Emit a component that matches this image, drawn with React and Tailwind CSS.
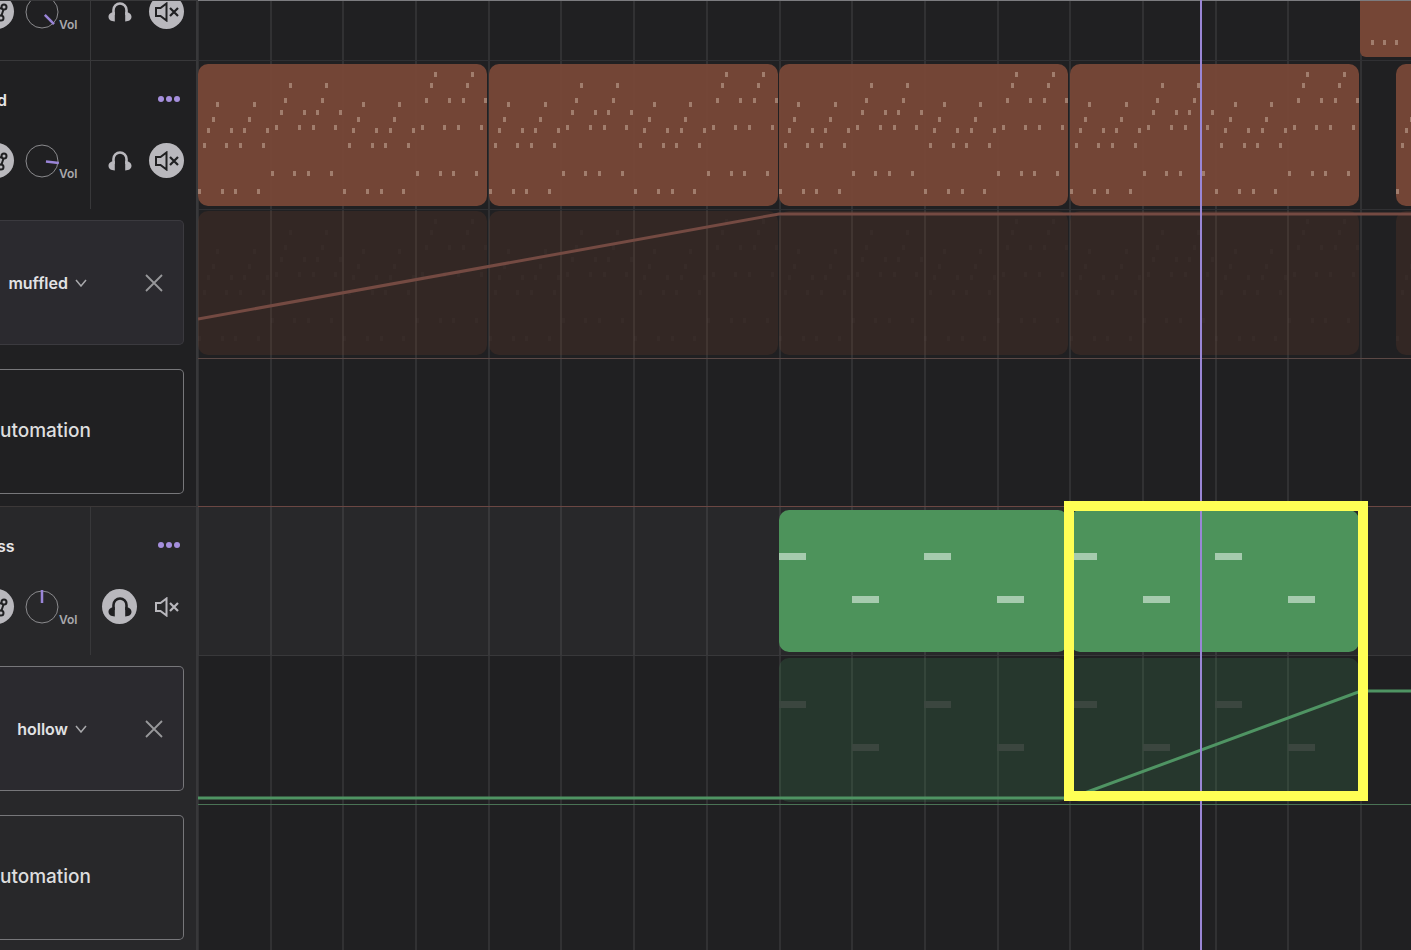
import React, { useState } from 'react';

// one bar is a bit under 73px, four bars make a clip
const barX = (bar) => Math.round((bar * 1163) / 16) - 1;
const BARS = Array.from({ length: 40 }, (_, i) => i);

const STEPS = [0, 1, 2, 3, 4, 0, 1, 2, 0, 1, 2, 3, 4, 0, 1, 2];
const CHORDS = [
  [125, 79, 64, 53, 38],
  [107, 61, 46, 34, 19],
  [125, 79, 64, 53, 38],
  [107, 61, 34, 19, 8],
];

const ARP_NOTES = CHORDS.flatMap((chord, bar) =>
  STEPS.map((level, step) => ({
    x: Math.round((bar + step / 16) * 72.7),
    y: chord[level],
    w: 3,
    h: 5,
  }))
);

const BASS_NOTES = [
  { x: 0, y: 43, w: 27, h: 7 },
  { x: 73, y: 86, w: 27, h: 7 },
  { x: 145, y: 43, w: 27, h: 7 },
  { x: 218, y: 86, w: 27, h: 7 },
];

const TOP_NOTES = [
  { x: 11, y: 39, w: 3, h: 5 },
  { x: 23, y: 39, w: 3, h: 5 },
  { x: 35, y: 39, w: 3, h: 5 },
];

const ARP_CLIPS = [0, 291, 581, 872, 1198];
const BASS_CLIPS = [581, 872];

const HeadphonesIcon = () => (
  <svg width="24" height="22" viewBox="0 0 24 22" fill="none" aria-hidden="true">
    <path d="M5.500 14V9a6.500 6.500 0 0 1 13 0v5" stroke="currentColor" strokeWidth="2.600" />
    <path d="M6.800 11v9.500C3 20.500.5 18.600.5 15.800S3 11.200 6.800 11ZM17.200 11v9.500c3.800 0 6.300-1.900 6.300-4.700S21 11.200 17.200 11Z" fill="currentColor" />
  </svg>
);

const MuteIcon = () => (
  <svg width="24" height="20" viewBox="0 0 24 20" fill="none" stroke="currentColor" strokeWidth="2" aria-hidden="true">
    <path d="M1 6h4.500L11.500 1.500v17L5.500 14H1Z" />
    <path d="m15 6 8 8M23 6l-8 8" strokeWidth="2.200" />
  </svg>
);

const RouteIcon = () => (
  <svg width="22" height="22" viewBox="0 0 22 22" fill="none" stroke="currentColor" strokeWidth="2" aria-hidden="true">
    <circle cx="18" cy="6" r="2.500" />
    <circle cx="15" cy="17" r="2.500" />
    <circle cx="4" cy="11" r="2.500" />
    <path d="M6.500 10 15.500 7M17.500 8.500 15.500 14.500M9 9l4 6" />
  </svg>
);

const Knob = ({ angle }) => (
  <svg width="34" height="34" viewBox="0 0 34 34" fill="none" role="img" aria-label="Volume knob">
    <circle cx="17" cy="17" r="16" stroke="#8b8b8e" />
    <path d="M17 13V0" stroke="#9a85d8" strokeWidth="2.500" transform={`rotate(${angle} 17 17)`} />
  </svg>
);

const RoundButton = ({ label, active, onClick, children }) => (
  <button
    aria-label={label}
    aria-pressed={active}
    onClick={onClick}
    className={
      active
        ? "flex h-[35px] w-[35px] shrink-0 items-center justify-center rounded-full bg-[#b9b8bd] text-[#202022]"
        : "flex h-[35px] w-[35px] shrink-0 items-center justify-center rounded-full text-[#b9b8bd]"
    }
  >
    {children}
  </button>
);

const TrackHeader = ({ name, angle, solo: initialSolo, mute: initialMute }) => {
  const [solo, setSolo] = useState(initialSolo);
  const [mute, setMute] = useState(initialMute);

  return (
    <div className="flex h-[148px] w-full shrink-0">
      <div className="flex w-[91px] flex-col border-r border-[#38383a] pt-7">
        <h2 className="-ml-[3px] h-5 text-base leading-[22px] font-semibold text-[#e6e6e8]">{name}</h2>
        <div className="mt-[34px] -ml-[21px] flex items-center gap-[11px]">
          <RoundButton label="Routing" active={true}>
            <RouteIcon />
          </RoundButton>
          <div className="flex items-end">
            <Knob angle={angle} />
            <span className="-mb-1 text-xs leading-4 font-semibold text-[#a9a9ac]">Vol</span>
          </div>
        </div>
      </div>
      <div className="flex flex-1 flex-col pt-7 pl-[11px]">
        <button aria-label="Track menu" className="mr-4 flex h-5 items-center justify-end gap-[2px]">
          <span className="h-[6px] w-[6px] rounded-full bg-[#a58fdd]"></span>
          <span className="h-[6px] w-[6px] rounded-full bg-[#a58fdd]"></span>
          <span className="h-[6px] w-[6px] rounded-full bg-[#a58fdd]"></span>
        </button>
        <div className="mt-[34px] flex gap-3">
          <RoundButton label="Solo" active={solo} onClick={() => setSolo(!solo)}>
            <HeadphonesIcon />
          </RoundButton>
          <RoundButton label="Mute" active={mute} onClick={() => setMute(!mute)}>
            <MuteIcon />
          </RoundButton>
        </div>
      </div>
    </div>
  );
};

const AutomationBox = ({ name, border }) => (
  <div className={`mt-[10px] flex h-[125px] w-full items-center rounded-r-[5px] border border-l-0 bg-[#2b2a2f] pr-5 ${border}`}>
    <button className="flex items-center gap-[7px] text-base leading-5 font-semibold text-[#e2e2e4]">
      <span className="w-[68px] text-right">{name}</span>
      <svg width="12" height="8" viewBox="0 0 12 8" fill="none" stroke="#a9a9ac" strokeWidth="1.500" aria-hidden="true">
        <path d="m1 1 5 6 5-6" />
      </svg>
    </button>
    <button aria-label="Remove automation" className="ml-auto">
      <svg width="18" height="18" viewBox="0 0 18 18" fill="none" stroke="#98989b" strokeWidth="1.800" aria-hidden="true">
        <path d="m1 1 16 16M17 1 1 17" />
      </svg>
    </button>
  </div>
);

const AddAutomation = () => (
  <button className="mt-[10px] flex h-[125px] w-full items-center rounded-r-[5px] border border-l-0 border-[#77777a] text-[19px] font-medium text-[#dededf]">
    utomation
  </button>
);

const Clip = ({ left, notes, className, noteFill }) => (
  <div className={`absolute w-[289px] overflow-hidden ${className}`} style={{ left }}>
    <svg width="289" height="144" aria-hidden="true">
      {notes.map((n, i) => (
        <rect key={i} x={n.x} y={n.y} width={n.w} height={n.h} className={noteFill} />
      ))}
    </svg>
  </div>
);

const Row = ({ height, side, lane, header, children }) => (
  <div className={`flex shrink-0 ${height}`}>
    <div className={`flex w-[198px] shrink-0 overflow-hidden border-r-2 border-r-[#38383a] ${side}`}>{header}</div>
    <div className={`relative flex-1 overflow-hidden border-b ${lane}`}>
      {BARS.map((bar) => (
        <div key={bar} className="absolute inset-y-0 w-[2px] bg-white/8" style={{ left: barX(bar) }}></div>
      ))}
      {children}
    </div>
  </div>
);

const Curve = ({ d, stroke }) => (
  <svg className="absolute inset-0 h-full w-full" fill="none" aria-hidden="true">
    <path d={d} className={stroke} strokeWidth="3" />
  </svg>
);

const App = () => {
  return (
    <main className="relative flex h-screen flex-col overflow-hidden bg-[#202022] font-['Inter',sans-serif]">
      <Row
        height="h-[61px]"
        side="items-end border-t border-b border-t-[#38383a] border-b-[#38383a]"
        lane="border-t border-t-[#7c7c80] border-b-[#303033]"
        header={<TrackHeader name="" angle={135} solo={false} mute={true} />}
      >
        <Clip left={1162} notes={TOP_NOTES} className="top-0 h-[56px] rounded-b-[6px] bg-[#754636]" noteFill="fill-[#a17d6d]" />
      </Row>

      <Row
        height="h-[149px]"
        side=""
        lane="border-b-[#303033]"
        header={<TrackHeader name="d" angle={97} solo={false} mute={true} />}
      >
        {ARP_CLIPS.map((x) => (
          <Clip key={x} left={x} notes={ARP_NOTES} className="top-[3px] h-[142px] rounded-[10px] bg-[#784838]/95" noteFill="fill-[#a17d6d]" />
        ))}
      </Row>

      <Row
        height="h-[149px]"
        side="pr-3"
        lane="border-b-[#5b4845]"
        header={<AutomationBox name="muffled" border="border-[#3b3a3f]" />}
      >
        {ARP_CLIPS.map((x) => (
          <Clip key={x} left={x} notes={ARP_NOTES} className="top-[1px] h-[144px] rounded-[10px] bg-[#80482f]/20" noteFill="fill-white/2" />
        ))}
        <Curve d="M0 109 581 4H4000" stroke="stroke-[#744a42]" />
      </Row>

      <Row height="h-[148px]" side="pr-3 border-b border-b-[#3c3838]" lane="border-b-[#6b4743]" header={<AddAutomation />} />

      <Row
        height="h-[149px]"
        side="bg-[#28282a]"
        lane="bg-[#28282a] border-b-[#38383a]"
        header={<TrackHeader name="ss" angle={0} solo={true} mute={false} />}
      >
        {BASS_CLIPS.map((x) => (
          <Clip key={x} left={x} notes={BASS_NOTES} className="top-[3px] h-[142px] rounded-[10px] bg-[#4d935b]" noteFill="fill-[#a6cbae]" />
        ))}
      </Row>

      <Row
        height="h-[149px]"
        side="bg-[#28282a] pr-3"
        lane="border-b-[#4a7355]"
        header={<AutomationBox name="hollow" border="border-[#77777a]" />}
      >
        {BASS_CLIPS.map((x) => (
          <Clip key={x} left={x} notes={BASS_NOTES} className="top-[2px] h-[144px] rounded-[10px] bg-[#41965a]/20" noteFill="fill-[#3b463f]" />
        ))}
        <Curve d="M0 142H873L1163 35H4000" stroke="stroke-[#4f9463]" />
      </Row>

      <Row height="h-[149px]" side="bg-[#28282a] pr-3" lane="border-b-[#303033]" header={<AddAutomation />} />

      {/* playhead */}
      <div className="absolute inset-y-0 left-[1200px] w-[2px] bg-[#9a86d6]"></div>
      {/* highlighted region */}
      <div className="absolute top-[501px] left-[1064px] h-[300px] w-[304px] border-10 border-[#ffff55]"></div>
    </main>
  );
};

export default App;
